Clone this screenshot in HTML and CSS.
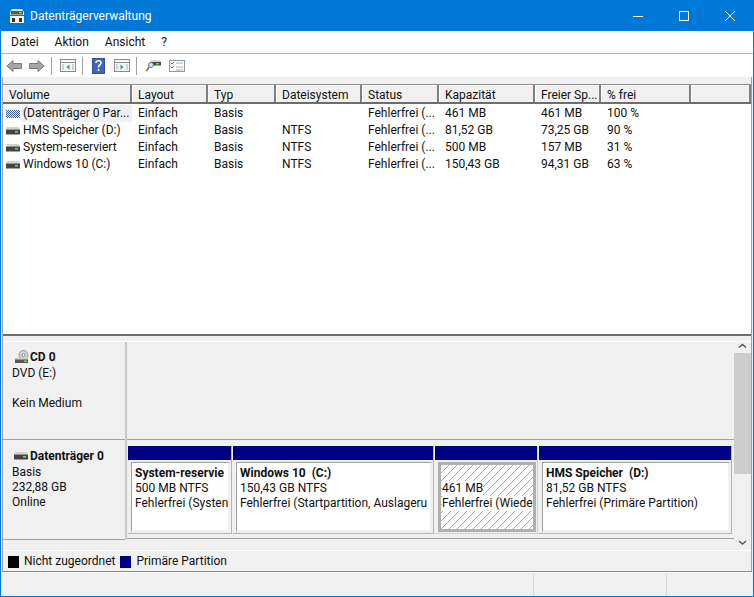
FILE: index.html
```html
<!DOCTYPE html>
<html lang="de">
<head>
<meta charset="utf-8">
<title>Datenträgerverwaltung</title>
<link rel="stylesheet" href="styles.css">
</head>
<body>
<svg class="defs" width="0" height="0" aria-hidden="true">
  <defs>
    <symbol id="drive" viewBox="0 0 14 8">
      <path d="M1 0h12l1 2.500H0z" fill="#d2d2d2"/>
      <rect x="0" y="2.500" width="14" height="5" fill="#444"/>
      <rect x="9" y="4" width="3" height="1.500" fill="#5fe05f"/>
    </symbol>
    <pattern id="hatch" width="8" height="8" patternUnits="userSpaceOnUse">
      <path d="M-1 1 1-1M0 8 8 0M7 9 9 7" stroke="#a8a8a8" stroke-width="1" fill="none"/>
    </pattern>
    <pattern id="dots" width="2" height="2" patternUnits="userSpaceOnUse">
      <rect width="2" height="2" fill="#e4ecf6"/>
      <rect width="1" height="1" fill="#3f5f96"/>
      <rect x="1" y="1" width="1" height="1" fill="#3f5f96"/>
    </pattern>
  </defs>
</svg>
<div class="window">
  <header class="titlebar">
    <svg class="appicon" width="16" height="16" viewBox="0 0 16 16">
      <path d="M3 1h10l2 3v3H1V4z" fill="#e4e4e4"/>
      <rect x="2" y="3" width="12" height="3.500" fill="#555"/>
      <rect x="10" y="3.800" width="3" height="1.500" fill="#5fe05f"/>
      <rect x="1" y="8" width="14" height="7" fill="#f2f2f2"/>
      <rect x="3" y="10" width="3" height="4" fill="#333"/>
      <rect x="10" y="10" width="3" height="4" fill="#333"/>
    </svg>
    <span class="title">Datenträgerverwaltung</span>
    <div class="caption">
      <svg class="cap" width="46" height="30" viewBox="0 0 46 30"><path d="M18 15.500h10" stroke="#fff"/></svg>
      <svg class="cap" width="46" height="30" viewBox="0 0 46 30"><rect x="18.500" y="10.500" width="9" height="9" fill="none" stroke="#fff"/></svg>
      <svg class="cap" width="46" height="30" viewBox="0 0 46 30"><path d="M18 10l10 10M28 10 18 20" stroke="#fff" fill="none"/></svg>
    </div>
  </header>
  <nav class="menubar">
    <span>Datei</span><span>Aktion</span><span>Ansicht</span><span>?</span>
  </nav>
  <div class="toolbar">
    <svg class="tool t-back" width="16" height="12" viewBox="0 0 16 12"><path d="M7 .5 .8 6 7 11.500V8.500h8.500v-5H7z" fill="#a6a6a6" stroke="#7a7a7a"/></svg>
    <svg class="tool t-fwd" width="16" height="12" viewBox="0 0 16 12"><path d="M9 .5 15.200 6 9 11.500V8.500H.5v-5H9z" fill="#a6a6a6" stroke="#7a7a7a"/></svg>
    <i class="sep"></i>
    <svg class="tool t-pane" width="16" height="13" viewBox="0 0 16 13"><rect x=".5" y=".5" width="15" height="12" fill="#f6f6f6" stroke="#8a8a8a"/><path d="M.5 3.500h15" stroke="#8a8a8a"/><path d="M2 6h2M2 8h2M2 10h2M12 6h2M12 8h2M12 10h2" stroke="#9db0c0"/><path d="M9.500 5.500v5L6.500 8z" fill="#2fa84a"/></svg>
    <i class="sep"></i>
    <svg class="tool t-help" width="13" height="16" viewBox="0 0 13 16"><rect width="13" height="16" fill="#2f4fa8"/><rect x="1" y="1" width="11" height="14" fill="#3f64c0"/><path d="M4 5c0-3 5-3 5 0 0 2-2.500 2-2.500 4.500M6.500 11v2" stroke="#fff" stroke-width="1.600" fill="none"/></svg>
    <svg class="tool t-pane2" width="16" height="13" viewBox="0 0 16 13"><rect x=".5" y=".5" width="15" height="12" fill="#f6f6f6" stroke="#8a8a8a"/><path d="M.5 3.500h15" stroke="#8a8a8a"/><path d="M2 6h2M2 8h2M2 10h2M12 6h2M12 8h2M12 10h2" stroke="#9db0c0"/><path d="M6.500 5.500v5L9.500 8z" fill="#2fa84a"/></svg>
    <i class="sep"></i>
    <svg class="tool t-find" width="15" height="13" viewBox="0 0 15 13"><path d="M4 2l1-1h8l2 1v4H4z" fill="#d8d8d8"/><rect x="4" y="3" width="11" height="3.500" fill="#444"/><rect x="10" y="4" width="3" height="1.500" fill="#5fe05f"/><circle cx="5" cy="6" r="2.500" fill="#cfe6f5" stroke="#777"/><path d="M3 8 .5 12" stroke="#8a6a3a" stroke-width="1.500"/></svg>
    <svg class="tool" width="16" height="12" viewBox="0 0 16 12"><rect x=".5" y=".5" width="15" height="11" fill="#fff" stroke="#8a9aa8"/><path d="M2 3l1 1 2-2M2 7l1 1 2-2" stroke="#2f6fd0" fill="none"/><path d="M7 3h7M7 7h7M7 10h7" stroke="#aaa"/></svg>
  </div>
  <main class="content">
    <section class="volumes">
      <div class="vrow vhead">
        <div class="th">Volume</div><div class="th">Layout</div><div class="th">Typ</div><div class="th">Dateisystem</div><div class="th">Status</div><div class="th">Kapazität</div><div class="th">Freier Sp...</div><div class="th">% frei</div><div class="th"></div>
      </div>
      <div class="vrow">
        <div class="vol"><svg class="dicon" width="14" height="8" viewBox="0 0 14 8"><rect width="14" height="8" fill="url(#dots)"/></svg><span class="vsel">(Datenträger 0 Par...</span></div><div>Einfach</div><div>Basis</div><div></div><div>Fehlerfrei (...</div><div>461 MB</div><div>461 MB</div><div>100 %</div><div></div>
      </div>
      <div class="vrow">
        <div class="vol"><svg class="dicon" width="14" height="8"><use href="#drive"/></svg><span>HMS Speicher (D:)</span></div><div>Einfach</div><div>Basis</div><div>NTFS</div><div>Fehlerfrei (...</div><div>81,52 GB</div><div>73,25 GB</div><div>90 %</div><div></div>
      </div>
      <div class="vrow">
        <div class="vol"><svg class="dicon" width="14" height="8"><use href="#drive"/></svg><span>System-reserviert</span></div><div>Einfach</div><div>Basis</div><div>NTFS</div><div>Fehlerfrei (...</div><div>500 MB</div><div>157 MB</div><div>31 %</div><div></div>
      </div>
      <div class="vrow">
        <div class="vol"><svg class="dicon" width="14" height="8"><use href="#drive"/></svg><span>Windows 10 (C:)</span></div><div>Einfach</div><div>Basis</div><div>NTFS</div><div>Fehlerfrei (...</div><div>150,43 GB</div><div>94,31 GB</div><div>63 %</div><div></div>
      </div>
    </section>
    <section class="disks">
      <div class="diskpane">
        <div class="disk cd">
          <div class="dinfo">
            <div class="dname"><svg width="16" height="14" viewBox="0 0 16 14"><circle cx="9.500" cy="5" r="4.500" fill="#d4d4d4" stroke="#999"/><circle cx="9.500" cy="5" r="1.500" fill="#fff" stroke="#888"/><rect x="1" y="8" width="13" height="5" fill="#555"/><rect x="1" y="8" width="13" height="1.500" fill="#ccc"/><rect x="10" y="10.500" width="3" height="1.500" fill="#5fe05f"/></svg><b>CD 0</b></div>
            <div>DVD (E:)</div>
            <div class="gap">Kein Medium</div>
          </div>
          <div class="dbody"></div>
        </div>
        <div class="disk hd">
          <div class="dinfo">
            <div class="dname"><svg width="14" height="8"><use href="#drive"/></svg><b>Datenträger 0</b></div>
            <div>Basis</div>
            <div>232,88 GB</div>
            <div>Online</div>
          </div>
          <div class="dbody parts">
            <div class="part"><div class="bar"></div><div class="box"><b>System-reservie</b><span>500 MB NTFS</span><span>Fehlerfrei (Systen</span></div></div>
            <div class="part"><div class="bar"></div><div class="box"><b>Windows 10&nbsp; (C:)</b><span>150,43 GB NTFS</span><span>Fehlerfrei (Startpartition, Auslageru</span></div></div>
            <div class="part selected"><div class="bar"></div><div class="box"><svg class="hatch" width="100%" height="100%"><rect width="100%" height="100%" fill="url(#hatch)"/></svg><span class="spacer"></span><span>461 MB</span><span>Fehlerfrei (Wiede</span></div></div>
            <div class="part"><div class="bar"></div><div class="box"><b>HMS Speicher&nbsp; (D:)</b><span>81,52 GB NTFS</span><span>Fehlerfrei (Primäre Partition)</span></div></div>
          </div>
        </div>
      </div>
      <div class="scrollbar">
        <svg width="17" height="11" viewBox="0 0 17 11"><path d="M5 5.500l3.500-3 3.500 3" fill="none" stroke="#555" stroke-width="1.500"/></svg>
        <div class="track"><div class="thumb"></div></div>
        <svg width="17" height="17" viewBox="0 0 17 17"><path d="M5 8l3.500 3L12 8" fill="none" stroke="#555" stroke-width="1.500"/></svg>
      </div>
    </section>
    <footer class="legend">
      <i class="swatch black"></i><span>Nicht zugeordnet</span>
      <i class="swatch navy"></i><span>Primäre Partition</span>
    </footer>
  </main>
  <div class="statusbar"><i></i><i></i></div>
</div>
</body>
</html>
```
FILE: styles.css
```css
* { box-sizing: border-box; }
html, body { margin: 0; padding: 0; }
body {
  width: 754px;
  height: 597px;
  overflow: hidden;
  font: 12px/15px Roboto, "Noto Sans", sans-serif;
  color: #111;
}
.defs { position: absolute; }
.window {
  width: 754px;
  height: 597px;
  display: flex;
  flex-direction: column;
  background: #f0f0f0;
  border: 1px solid #0078d7;
  border-top: 0;
}
.titlebar {
  height: 31px;
  flex: none;
  margin: 0 -1px;
  background: #0078d7;
  color: #fff;
  display: flex;
  align-items: center;
  padding-left: 9px;
}
.appicon { flex: none; }
.title { margin: 2px 0 0 5px; }
.caption { margin-left: auto; display: flex; margin-right: 1px; }
.cap { display: block; }
.menubar {
  height: 23px;
  flex: none;
  background: #fff;
  border-bottom: 1px solid #b4b4bc;
  display: flex;
  align-items: center;
  gap: 16px;
  padding: 1px 0 0 10px;
}
.toolbar {
  height: 23px;
  flex: none;
  background: #fff;
  display: flex;
  align-items: center;
  padding-left: 5px;
}
.tool { display: block; flex: none; margin-right: 8px; }
.t-back { margin-right: 7px; }
.t-fwd, .t-pane, .t-pane2 { margin-right: 0; }
.t-help { margin-right: 9px; }
.t-fwd + .sep { margin-left: 6px; }
.t-pane + .sep, .t-pane2 + .sep { margin-left: 6px; }
.sep { width: 1px; height: 18px; background: #a0a0a0; margin-right: 8px; flex: none; }
.t-pane + .sep, .t-pane2 + .sep { margin-right: 9px; }
.content {
  flex: 1;
  display: flex;
  flex-direction: column;
  min-height: 0;
  margin: 0 1px;
  padding: 7px 1px 0;
  border-bottom: 1px solid #8c8c8c;
  box-shadow: inset 1px 0 0 #a0a0a0, inset -1px 0 0 #a0a0a0;
}
.volumes {
  height: 252px;
  flex: none;
  background: #fff;
  border-top: 1px solid #8c8c8c;
  border-bottom: 2px solid #6d6d6d;
}
.vrow {
  display: grid;
  grid-template-columns: 129px 76px 68px 86px 77px 96px 66px 90px 1fr;
  height: 17px;
  line-height: 17px;
  align-items: center;
}
.vrow > div { padding-left: 6px; white-space: nowrap; overflow: hidden; }
.vhead {
  height: 19px;
  margin-bottom: 1px;
  background: #f0f0f0;
  border-bottom: 2px solid #6d6d6d;
}
.vhead .th {
  height: 17px;
  line-height: 20px;
  border-right: 2px solid #808080;
  box-shadow: inset 1px 1px 0 #fff;
  padding-left: 6px;
}
.vrow > .vol { padding-left: 3px; display: flex; align-items: center; }
.dicon { flex: none; margin-right: 3px; display: block; }
.vsel { background: #f0f0f0; flex: 1; margin-left: -2px; padding-left: 2px; }
.disks {
  flex: none;
  height: 210px;
  margin-top: 5px;
  display: flex;
  border-top: 1px solid #fff;
  border-bottom: 1px solid #fff;
}
.diskpane { flex: 1; min-width: 0; display: flex; flex-direction: column; }
.disk { display: flex; }
.disk.cd { height: 98px; }
.disk.hd { height: 100px; }
.dinfo {
  width: 124px;
  flex: none;
  padding: 7px 0 0 9px;
  border-right: 2px solid #c8c8c8;
  box-shadow: inset 0 -1px 0 #a0a0a0;
}
.dname { display: flex; align-items: center; height: 16px; margin-bottom: 1px; }
.dname svg { flex: none; margin-left: 2px; }
.hd .dinfo { padding-top: 8px; }
.hd .dname { margin-bottom: 1px; }
.hd .dname svg { margin-right: 2px; }
.gap { margin-top: 15px; }
.dbody { flex: 1; min-width: 0; border-bottom: 1px solid #a0a0a0; }
.parts {
  display: grid;
  grid-template-columns: 104px 201px 103px 1fr;
  gap: 1px;
  padding: 6px 2px 0 1px;
  height: 99px;
  align-items: start;
}
.part {
  height: 88px;
  border-right: 1px solid #b4b4b4;
  border-bottom: 1px solid #b4b4b4;
}
.bar { height: 14px; background: #000080; margin-bottom: 2px; }
.box {
  height: 71px;
  margin-left: 3px;
  background: #fff;
  border-left: 1px solid #a0a0a0;
  border-top: 1px solid #a0a0a0;
  padding: 3px 0 0 3px;
  display: flex;
  flex-direction: column;
  overflow: hidden;
  position: relative;
  white-space: nowrap;
  border-right: 3px solid #f0f0f0;
  border-bottom: 3px solid #f0f0f0;
}
.box b { height: 15px; }
.selected { border-color: #d0d0d0; }
.selected .box { border: 3px solid #b0b0b0; padding: 0 0 0 1px; margin-left: 3px; margin-right: 1px; height: 70px; }
.selected .box span { position: relative; background: #fff; width: fit-content; }
.selected .box .spacer { height: 16px; background: none; }
.hatch { position: absolute; left: 0; top: 0; }
.scrollbar {
  width: 17px;
  flex: none;
  display: flex;
  flex-direction: column;
}
.scrollbar svg { display: block; flex: none; }
.track { flex: 1; min-height: 0; }
.thumb { height: 121px; background: #cdcdcd; }
.legend {
  flex: none;
  height: 19px;
  display: flex;
  align-items: center;
  padding-left: 5px;
  margin-top: 1px;
  background: #f0f0f0;
}
.swatch { width: 11px; height: 12px; margin-right: 5px; flex: none; }
.swatch.black { background: #000; }
.swatch.navy { background: #000080; margin-left: 5px; }
.statusbar {
  height: 24px;
  flex: none;
  display: flex;
  justify-content: flex-end;
  padding-top: 2px;
  box-shadow: inset 0 1px 0 #fff;
}
.statusbar i { width: 133px; border-left: 1px solid #d8d8d8; }
.statusbar i + i { width: 87px; }
```
